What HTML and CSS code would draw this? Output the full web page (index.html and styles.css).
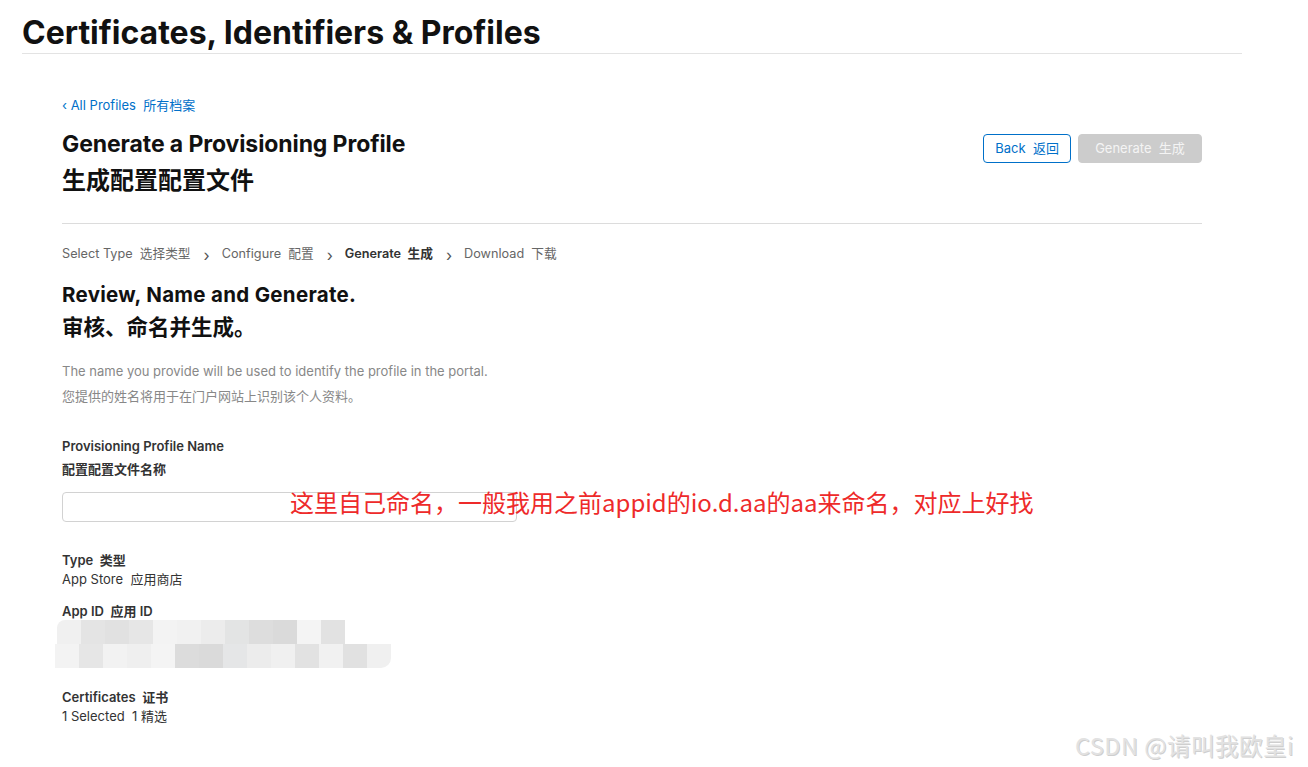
FILE: index.html
```html
<!DOCTYPE html>
<html lang="zh">
<head>
<meta charset="utf-8">
<title>Certificates, Identifiers &amp; Profiles</title>
<link rel="stylesheet" href="styles.css">
</head>
<body>
<header class="topbar">
  <h1 class="page-title">Certificates, Identifiers &amp; Profiles</h1>
</header>
<main class="content">
  <a class="back-link" href="#">‹ All Profiles&nbsp; 所有档案</a>
  <div class="title-row">
    <div class="titles">
      <h2 class="main-title">Generate a Provisioning Profile</h2>
      <h2 class="main-title-cn">生成配置配置文件</h2>
    </div>
    <div class="actions">
      <button class="btn btn-outline">Back&nbsp; 返回</button>
      <button class="btn btn-disabled">Generate&nbsp; 生成</button>
    </div>
  </div>
  <div class="steps">
    <span class="step">Select Type&nbsp; 选择类型</span>
    <span class="chev">›</span>
    <span class="step">Configure&nbsp; 配置</span>
    <span class="chev">›</span>
    <span class="step current">Generate&nbsp; 生成</span>
    <span class="chev">›</span>
    <span class="step">Download&nbsp; 下载</span>
  </div>
  <h3 class="section-title">Review, Name and Generate.</h3>
  <h3 class="section-title-cn">审核、命名并生成。</h3>
  <p class="desc">The name you provide will be used to identify the profile in the portal.</p>
  <p class="desc desc-cn">您提供的姓名将用于在门户网站上识别该个人资料。</p>

  <div class="field">
    <div class="label">Provisioning Profile Name</div>
    <div class="label-cn">配置配置文件名称</div>
    <div class="input-wrap">
      <input class="text-input" type="text">
      <span class="annotation">这里自己命名，一般我用之前appid的io.d.aa的aa来命名，对应上好找</span>
    </div>
  </div>

  <div class="info">
    <div class="info-label">Type&nbsp; 类型</div>
    <div class="info-value">App Store&nbsp; 应用商店</div>
  </div>
  <div class="info">
    <div class="info-label">App ID&nbsp; 应用 ID</div>
    <div class="mosaic">
      <div class="mrow top">
        <i class="c1 first"></i><i class="c2"></i><i class="c3"></i><i class="c4"></i><i class="c5"></i><i class="c6"></i><i class="c7"></i><i class="c8"></i><i class="c9"></i><i class="c10"></i><i class="c11"></i><i class="c12"></i><i class="c13"></i>
      </div>
      <div class="mrow bottom">
        <i class="d1"></i><i class="d2"></i><i class="d3"></i><i class="d4"></i><i class="d5"></i><i class="d6"></i><i class="d7"></i><i class="d8"></i><i class="d9"></i><i class="d10"></i><i class="d11"></i><i class="d12"></i><i class="d13"></i><i class="d14 last"></i>
      </div>
    </div>
  </div>
  <div class="info certs">
    <div class="info-label">Certificates&nbsp; 证书</div>
    <div class="info-value">1 Selected&nbsp; 1 精选</div>
  </div>
</main>
<div class="watermark">CSDN @请叫我欧皇i</div>
</body>
</html>
```

FILE: styles.css
```css
html, body {
  margin: 0;
  padding: 0;
  background: #fff;
}
body {
  font-family: Inter, "Noto Sans CJK SC", sans-serif;
  color: #1d1d1f;
  width: 1308px;
  height: 767px;
  overflow: hidden;
  position: relative;
}
.topbar {
  margin: 0 66px 0 22px;
  border-bottom: 1px solid #e3e3e3;
  padding-top: 13px;
  box-sizing: border-box;
  height: 54px;
}
.page-title {
  margin: 0;
  font-size: 32px;
  font-weight: 700;
  line-height: 40px;
  letter-spacing: 0;
  color: #111;
}
.content {
  margin: 0 106px 0 62px;
  display: flex;
  flex-direction: column;
  align-items: flex-start;
}
.back-link {
  margin-top: 42px;
  font-size: 13px;
  line-height: 18px;
  color: #0070c9;
  text-decoration: none;
}
.title-row {
  align-self: stretch;
  display: flex;
  justify-content: space-between;
  align-items: flex-start;
  border-bottom: 1px solid #dcdcdc;
  padding-bottom: 25px;
  margin-top: 14px;
}
.main-title {
  margin: 0;
  font-size: 23px;
  font-weight: 700;
  line-height: 32px;
  color: #111;
  letter-spacing: -0.1px;
}
.main-title-cn {
  margin: 4px 0 0;
  font-size: 24px;
  font-weight: 700;
  line-height: 34px;
  color: #111;
}
.actions {
  display: flex;
  gap: 7px;
  margin-top: 6px;
}
.btn {
  font-family: Inter, "Noto Sans CJK SC", sans-serif;
  font-size: 13px;
  height: 29px;
  border-radius: 4px;
  padding: 0 11px;
  line-height: 27px;
  cursor: pointer;
}
.btn-outline {
  background: #fff;
  border: 1px solid #0070c9;
  color: #0070c9;
}
.btn-disabled {
  background: #cccccc;
  border: 1px solid #cccccc;
  color: #f4f4f4;
  width: 124px;
  padding: 0;
}
.steps {
  display: flex;
  align-items: center;
  margin-top: 19px;
  font-size: 12.7px;
  line-height: 20px;
  color: #666;
}
.chev {
  margin: 2px 12px 0 13px;
  font-size: 16px;
  color: #555;
}
.step.current {
  font-weight: 600;
  color: #333;
}
.section-title {
  margin: 17px 0 0;
  font-size: 20.5px;
  font-weight: 700;
  line-height: 26px;
  color: #111;
  letter-spacing: 0.3px;
}
.section-title-cn {
  margin: 6px 0 0;
  font-size: 21.5px;
  font-weight: 700;
  line-height: 26px;
  color: #111;
}
.desc {
  margin: 23px 0 0;
  font-size: 13px;
  line-height: 16px;
  color: #888;
}
.desc-cn {
  margin-top: 9px;
}
.field {
  margin-top: 33px;
  display: flex;
  flex-direction: column;
}
.label {
  font-size: 13px;
  font-weight: 600;
  line-height: 18px;
  color: #333;
}
.label-cn {
  margin-top: 5px;
  font-size: 13px;
  font-weight: 700;
  line-height: 18px;
  color: #333;
}
.input-wrap {
  position: relative;
  margin-top: 14px;
}
.text-input {
  display: block;
  width: 455px;
  height: 30px;
  box-sizing: border-box;
  border: 1px solid #d2d2d2;
  border-radius: 4px;
  margin: 0;
}
.annotation {
  position: absolute;
  left: 228px;
  top: -5px;
  white-space: nowrap;
  font-family: "Noto Sans CJK SC", sans-serif;
  font-size: 24px;
  line-height: 30px;
  color: #ee2a2a;
  letter-spacing: 0;
}
.info {
  display: flex;
  flex-direction: column;
  margin-top: 29px;
}
.info + .info {
  margin-top: 13px;
}
.info.certs {
  margin-top: 20px;
}
.info-label {
  font-size: 13px;
  font-weight: 600;
  line-height: 19px;
  color: #333;
}
.info-value {
  font-size: 13px;
  line-height: 19px;
  color: #333;
}
.mosaic {
  margin-left: -7px;
  margin-top: -1px;
  display: flex;
  flex-direction: column;
}
.mrow {
  display: flex;
  height: 24px;
}
.mrow i {
  display: block;
  width: 24px;
  height: 24px;
  flex: none;
}
.mrow.top { margin-left: 2px; }
.mrow.top .first { border-radius: 8px 0 0 0; }
.c1 { background: #f0f0f0; }
.c2 { background: #e4e4e4; }
.c3 { background: #e1e1e1; }
.c4 { background: #e6e6e6; }
.c5 { background: #f3f3f3; }
.c6 { background: #f1f1f1; }
.c7 { background: #ececec; }
.c8 { background: #e3e4e4; }
.c9 { background: #dddddd; }
.c10 { background: #dadada; }
.c11 { background: #f4f4f4; }
.c12 { background: #e2e2e2; }
.c13 { background: #ffffff; }
.d1 { background: #f3f3f3; }
.d2 { background: #e6e6e6; }
.d3 { background: #f2f2f2; }
.d4 { background: #efefef; }
.d5 { background: #f4f4f4; }
.d6 { background: #dcdcdc; }
.d7 { background: #dadada; }
.d8 { background: #e5e6e7; }
.d9 { background: #ececec; }
.d10 { background: #f0f0f0; }
.d11 { background: #e2e2e2; }
.d12 { background: #f1f1f1; }
.d13 { background: #e1e1e1; }
.d14 { background: #f0f0f0; }
.mrow.bottom .last { border-radius: 0 0 10px 0; }
.watermark {
  position: absolute;
  left: 1075px;
  top: 729px;
  font-family: "Noto Sans CJK SC", sans-serif;
  font-size: 23.5px;
  line-height: 32px;
  color: #e2e2e2;
  text-shadow: 1px 1px 0 #cfcfcf;
  white-space: nowrap;
  letter-spacing: 0.5px;
}
```
